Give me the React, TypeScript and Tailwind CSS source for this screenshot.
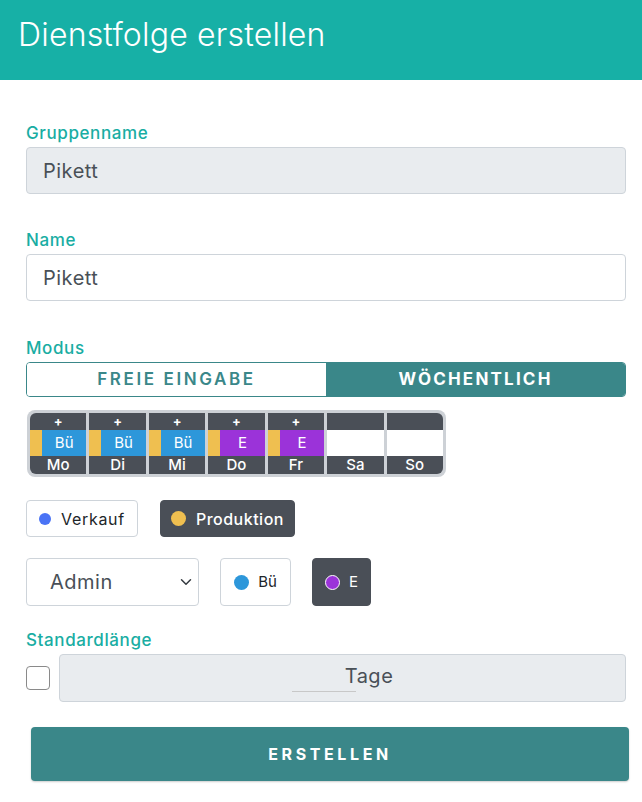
import { useState } from 'react';

// Shift types and groups used in the weekly plan
interface DaySlot {
  label: string;
  shift: 'bu' | 'e' | null;
}

const week: DaySlot[] = [
  { label: 'Mo', shift: 'bu' },
  { label: 'Di', shift: 'bu' },
  { label: 'Mi', shift: 'bu' },
  { label: 'Do', shift: 'e' },
  { label: 'Fr', shift: 'e' },
  { label: 'Sa', shift: null },
  { label: 'So', shift: null },
];

const font = { fontFamily: 'Inter, "Noto Sans", sans-serif' };

function Label({ children }: { children: React.ReactNode }) {
  return <div className="text-[17px] font-medium text-[#19ada3] leading-5 tracking-[0.6px] mb-[4px]">{children}</div>;
}

export default function App() {
  const [mode, setMode] = useState<'free' | 'weekly'>('weekly');
  const [group, setGroup] = useState<'verkauf' | 'produktion'>('produktion');
  const [shift, setShift] = useState<'bu' | 'e'>('e');
  const [name, setName] = useState('Pikett');

  return (
    <div className="w-[642px] min-h-[802px] bg-white" style={font}>
      {/* Header */}
      <div className="h-[80px] bg-[#17b0a6] flex items-center px-[18px]">
        <h1 className="text-[32px] font-light text-white tracking-[0.2px] -mt-[11px]">Dienstfolge erstellen</h1>
      </div>

      <div className="pl-[26px] pr-[16px] pt-[43px]">
        <Label>Gruppenname</Label>
        <div className="h-[47px] rounded-[4px] border border-[#ced4da] bg-[#e9ecef] flex items-center px-[16px] text-[20px] tracking-[0.5px] text-[#495057]">
          Pikett
        </div>

        <div className="mt-[36px]">
          <Label>Name</Label>
          <input
            value={name}
            onChange={(e) => setName(e.target.value)}
            className="w-full h-[47px] rounded-[4px] border border-[#ced4da] bg-white px-[16px] text-[20px] tracking-[0.5px] text-[#495057] outline-none"
          />
        </div>

        <div className="mt-[37px]">
          <Label>Modus</Label>
          <div className="flex h-[35px] rounded-[4px] border border-[#3a8789] overflow-hidden">
            <button
              onClick={() => setMode('free')}
              className={`flex-1 text-[17px] font-semibold tracking-[2.6px] ${mode === 'free' ? 'bg-[#3a8789] text-white' : 'bg-white text-[#3a8789]'}`}
            >
              FREIE EINGABE
            </button>
            <button
              onClick={() => setMode('weekly')}
              className={`flex-1 text-[17px] font-bold tracking-[2.2px] ${mode === 'weekly' ? 'bg-[#3a8789] text-white' : 'bg-white text-[#3a8789]'}`}
            >
              WÖCHENTLICH
            </button>
          </div>
        </div>

        {/* Weekly grid */}
        <div className="mt-[13px] ml-[1px] w-[419px] flex gap-[3px] p-[3px] bg-[#cdd1d6] rounded-[8px]">
          {week.map((day, i) => (
            <div
              key={day.label}
              className={`flex-1 flex flex-col overflow-hidden ${i === 0 ? 'rounded-l-[6px]' : ''} ${i === 6 ? 'rounded-r-[6px]' : ''}`}
            >
              <div className="h-[17px] bg-[#4a4f57] text-white text-[13px] font-bold leading-[17px] text-center">
                {day.shift ? '+' : ''}
              </div>
              <div className="h-[26px] flex bg-white">
                {day.shift && (
                  <>
                    <div className="w-[12px] bg-[#efbf50]" />
                    <div
                      className={`flex-1 flex items-center justify-center text-white text-[15px] ${day.shift === 'bu' ? 'bg-[#2d97da]' : 'bg-[#9b33d9]'}`}
                    >
                      {day.shift === 'bu' ? 'Bü' : 'E'}
                    </div>
                  </>
                )}
              </div>
              <div className="h-[18px] bg-[#4a4f57] text-white text-[15px] font-medium leading-[18px] text-center">
                {day.label}
              </div>
            </div>
          ))}
        </div>

        {/* Groups */}
        <div className="mt-[23px] flex gap-[22px]">
          <button
            onClick={() => setGroup('verkauf')}
            className={`h-[37px] px-[12px] rounded-[4px] flex items-center gap-[10px] text-[16px] tracking-[0.7px] border ${group === 'verkauf' ? 'bg-[#4a4f57] border-[#4a4f57] text-white' : 'bg-white border-[#ced4da] text-[#212529]'}`}
          >
            <span className="w-[12px] h-[12px] rounded-full bg-[#4a73f5]" />
            Verkauf
          </button>
          <button
            onClick={() => setGroup('produktion')}
            className={`h-[37px] px-[10px] rounded-[4px] flex items-center gap-[10px] text-[16px] font-medium tracking-[0.5px] border ${group === 'produktion' ? 'bg-[#4a4f57] border-[#4a4f57] text-white' : 'bg-white border-[#ced4da] text-[#212529]'}`}
          >
            <span className="w-[15px] h-[15px] rounded-full bg-[#efbf50]" />
            Produktion
          </button>
        </div>

        {/* Role and shift */}
        <div className="mt-[21px] flex gap-[21px] items-center">
          <div className="relative w-[173px] h-[48px]">
            <select className="appearance-none w-full h-full rounded-[4px] border border-[#ced4da] bg-white pl-[23px] text-[20px] tracking-[0.5px] text-[#495057] outline-none">
              <option>Admin</option>
            </select>
            <svg className="absolute right-[7px] top-[18px] pointer-events-none" width="12" height="12" viewBox="0 0 16 16">
              <path d="M2 5l6 6 6-6" fill="none" stroke="#343a40" strokeWidth="2" strokeLinecap="round" strokeLinejoin="round" />
            </svg>
          </div>
          <button
            onClick={() => setShift('bu')}
            className={`h-[48px] w-[71px] rounded-[4px] flex items-center justify-center gap-[9px] text-[15px] border ${shift === 'bu' ? 'bg-[#4a4f57] border-[#4a4f57] text-white' : 'bg-white border-[#ced4da] text-[#212529]'}`}
          >
            <span className="w-[15px] h-[15px] rounded-full bg-[#2d97da]" />
            Bü
          </button>
          <button
            onClick={() => setShift('e')}
            className={`h-[48px] w-[59px] rounded-[4px] flex items-center justify-center gap-[9px] text-[15px] border ${shift === 'e' ? 'bg-[#4a4f57] border-[#4a4f57] text-white' : 'bg-white border-[#ced4da] text-[#212529]'}`}
          >
            <span className="w-[15px] h-[15px] rounded-full bg-[#9b33d9] border border-white" />
            E
          </button>
        </div>

        <div className="mt-[24px]">
          <Label>Standardlänge</Label>
          <div className="flex items-center gap-[9px]">
            <input type="checkbox" className="appearance-none w-[24px] h-[24px] rounded-[4px] border border-[#8a8a8a] bg-white shrink-0" />
            <div className="flex-1 h-[48px] rounded-[4px] border border-[#ced4da] bg-[#e9ecef] flex items-center justify-center text-[20px] tracking-[0.5px] text-[#495057]">
              <div className="w-[64px] h-[28px] border-b border-[#c8c8c8]" />
              <span className="-ml-[11px] -mt-[4px]">Tage</span>
            </div>
          </div>
        </div>

        <button className="mt-[25px] ml-[5px] w-[598px] h-[54px] rounded-[4px] bg-[#3a8789] text-white text-[16px] font-bold tracking-[3.6px] shadow-[0_1px_2px_rgba(0,0,0,0.2)]">
          ERSTELLEN
        </button>
      </div>
    </div>
  );
}
